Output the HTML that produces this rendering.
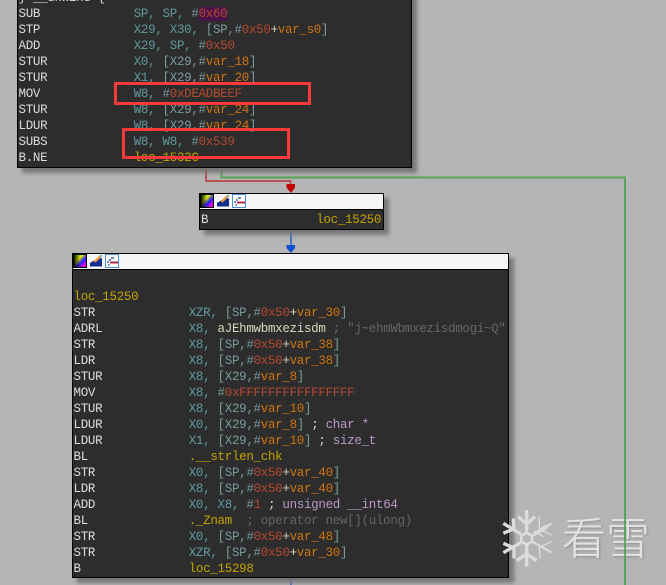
<!DOCTYPE html>
<html>
<head>
<meta charset="utf-8">
<style>
html,body{margin:0;padding:0;}
body{width:666px;height:585px;overflow:hidden;background:#b5b5b5;position:relative;}
.blk{position:absolute;background:#2d2d2d;border:1.5px solid #000;box-sizing:border-box;box-shadow:5px 5px 4px #777;}
.hd{position:absolute;left:0;right:0;top:0;height:15px;background:#f5f5f5;border-bottom:1.5px solid #000;}
pre{position:absolute;margin:0;font:12.5px/16px "Liberation Mono",monospace;letter-spacing:-.3px;color:#dcdcdc;white-space:pre;}
i{font-style:normal}
.r{color:#5f9a9c}.s{color:#7b9aa0}.n{color:#b5482f}.v{color:#cf7410}.l{color:#c4a400}.c{color:#666}.t{color:#b79ac8}.y{color:#d8d8c0}
.box{position:absolute;border:3px solid #f83a3a;box-sizing:border-box;}
svg{position:absolute;overflow:visible;}
.ic{position:absolute;top:1px;width:12px;height:12px;}
.wm{position:absolute;left:562px;top:507px;font:300 44px/56px "Noto Sans CJK SC","WenQuanYi Zen Hei",sans-serif;color:#e2e2e2;-webkit-text-stroke:.3px #e2e2e2;text-shadow:1px 1px 2px #888;white-space:nowrap;}
</style>
</head>
<body>

<svg style="left:0;top:0" width="666" height="585">
<path d="M206 167V181H290.500V186" fill="none" stroke="#b95353" stroke-width="2"/>
<path d="M221.500 167V177.500H625V585" fill="none" stroke="#56a556" stroke-width="2"/>
<path d="M291 229V247" fill="none" stroke="#4a74c8" stroke-width="2"/>
<path d="M291 577V585" fill="none" stroke="#4a74c8" stroke-width="2"/>
<path d="M286.500 184H295V187.500L291 193L286.500 187.500Z" fill="#c00000"/>
<path d="M286.500 245H295V248L291 253L286.500 248Z" fill="#0a50d0"/>
</svg>

<div class="blk" style="left:17px;top:-10px;width:395px;height:178px;">
<pre style="left:0.500px;top:-1.500px">} __unwind {
SUB             <i class="r">SP, SP, </i><i class="s">#</i><i class="n" style="background:#4a124a">0x60</i>
STP             <i class="r">X29, X30, </i><i class="s">[SP,#</i><i class="n">0x50</i><i class="y">+</i><i class="v">var_s0</i><i class="s">]</i>
ADD             <i class="r">X29, SP, </i><i class="s">#</i><i class="n">0x50</i>
STUR            <i class="r">X0, </i><i class="s">[X29,#</i><i class="v">var_18</i><i class="s">]</i>
STUR            <i class="r">X1, </i><i class="s">[X29,#</i><i class="v">var_20</i><i class="s">]</i>
MOV             <i class="r">W8, </i><i class="s">#</i><i class="n">0xDEADBEEF</i>
STUR            <i class="r">W8, </i><i class="s">[X29,#</i><i class="v">var_24</i><i class="s">]</i>
LDUR            <i class="r">W8, </i><i class="s">[X29,#</i><i class="v">var_24</i><i class="s">]</i>
SUBS            <i class="r">W8, W8, </i><i class="s">#</i><i class="n">0x539</i>
B.NE            <i class="l">loc_1532C</i></pre>
</div>

<div class="blk" style="left:199px;top:193px;width:185px;height:37px;">
<div class="hd">
<svg class="ic" style="left:1px" width="12" height="12" viewBox="0 0 12 12"><defs><linearGradient id="g1" x1="0" y1="0" x2="1" y2="1"><stop offset="0" stop-color="#2f2"/><stop offset=".35" stop-color="#ee0"/><stop offset=".6" stop-color="#22e"/><stop offset=".85" stop-color="#e0e"/><stop offset="1" stop-color="#e22"/></linearGradient><linearGradient id="g2" x1="0" y1="0" x2="1" y2="0"><stop offset="0" stop-color="#000" stop-opacity=".9"/><stop offset=".5" stop-color="#000" stop-opacity="0"/></linearGradient></defs><rect x="-.5" y="-.5" width="13" height="13" fill="url(#g1)" stroke="#000"/><rect width="12" height="12" fill="url(#g2)"/></svg>
<svg class="ic" style="left:17px" width="13" height="12" viewBox="0 0 13 12"><path d="M0 12V8L9 3H13V12Z" fill="#11308c"/><path d="M5 7L11 1" stroke="#ec9a3c" stroke-width="2.500"/><path d="M11 1L13 0" stroke="#5ab" stroke-width="2"/></svg>
<svg class="ic" style="left:33px" width="12" height="12" viewBox="0 0 12 12"><rect x="-.5" y="-.5" width="13" height="13" fill="#fff" stroke="#4a90d8"/><path d="M5 3H8M3 5H5M1 7H3" stroke="#1a3a9c" stroke-width="1.200"/><path d="M4 7.500H12" stroke="#b02848" stroke-width="2"/><path d="M2 10H4" stroke="#1a3a9c"/></svg>
</div>
<pre style="left:1px;top:18px">B               <i class="l">loc_15250</i></pre>
</div>

<div class="blk" style="left:72px;top:253px;width:437px;height:325px;">
<div class="hd">
<svg class="ic" style="left:1px" width="12" height="12" viewBox="0 0 12 12"><rect x="-.5" y="-.5" width="13" height="13" fill="url(#g1)" stroke="#000"/><rect width="12" height="12" fill="url(#g2)"/></svg>
<svg class="ic" style="left:17px" width="13" height="12" viewBox="0 0 13 12"><path d="M0 12V8L9 3H13V12Z" fill="#11308c"/><path d="M5 7L11 1" stroke="#ec9a3c" stroke-width="2.500"/><path d="M11 1L13 0" stroke="#5ab" stroke-width="2"/></svg>
<svg class="ic" style="left:33px" width="12" height="12" viewBox="0 0 12 12"><rect x="-.5" y="-.5" width="13" height="13" fill="#fff" stroke="#4a90d8"/><path d="M5 3H8M3 5H5M1 7H3" stroke="#1a3a9c" stroke-width="1.200"/><path d="M4 7.500H12" stroke="#b02848" stroke-width="2"/><path d="M2 10H4" stroke="#1a3a9c"/></svg>
</div>
<pre style="left:0.500px;top:35px"><i class="l">loc_15250</i>
STR             <i class="r">XZR, </i><i class="s">[SP,#</i><i class="n">0x50</i><i class="y">+</i><i class="v">var_30</i><i class="s">]</i>
ADRL            <i class="r">X8, </i><i class="y">aJEhmwbmxezisdm</i> <i class="c">; "j~ehmWbmxezisdmogi~Q"</i>
STR             <i class="r">X8, </i><i class="s">[SP,#</i><i class="n">0x50</i><i class="y">+</i><i class="v">var_38</i><i class="s">]</i>
LDR             <i class="r">X8, </i><i class="s">[SP,#</i><i class="n">0x50</i><i class="y">+</i><i class="v">var_38</i><i class="s">]</i>
STUR            <i class="r">X8, </i><i class="s">[X29,#</i><i class="v">var_8</i><i class="s">]</i>
MOV             <i class="r">X8, </i><i class="s">#</i><i class="n">0xFFFFFFFFFFFFFFFF</i>
STUR            <i class="r">X8, </i><i class="s">[X29,#</i><i class="v">var_10</i><i class="s">]</i>
LDUR            <i class="r">X0, </i><i class="s">[X29,#</i><i class="v">var_8</i><i class="s">]</i> <i class="y">;</i> <i class="t">char *</i>
LDUR            <i class="r">X1, </i><i class="s">[X29,#</i><i class="v">var_10</i><i class="s">]</i> <i class="y">;</i> <i class="t">size_t</i>
BL              <i class="l">.__strlen_chk</i>
STR             <i class="r">X0, </i><i class="s">[SP,#</i><i class="n">0x50</i><i class="y">+</i><i class="v">var_40</i><i class="s">]</i>
LDR             <i class="r">X8, </i><i class="s">[SP,#</i><i class="n">0x50</i><i class="y">+</i><i class="v">var_40</i><i class="s">]</i>
ADD             <i class="r">X0, X8, </i><i class="s">#</i><i class="n">1</i> <i class="y">;</i> <i class="t">unsigned __int64</i>
BL              <i class="l">._Znam</i>  <i class="c">; operator new[](ulong)</i>
STR             <i class="r">X0, </i><i class="s">[SP,#</i><i class="n">0x50</i><i class="y">+</i><i class="v">var_48</i><i class="s">]</i>
STR             <i class="r">XZR, </i><i class="s">[SP,#</i><i class="n">0x50</i><i class="y">+</i><i class="v">var_30</i><i class="s">]</i>
B               <i class="l">loc_15298</i></pre>
</div>

<div class="box" style="left:114px;top:82px;width:197px;height:23px;"></div>
<div class="box" style="left:122px;top:128px;width:168px;height:31px;"></div>

<svg style="left:490px;top:490px" width="176" height="95" viewBox="0 0 528 285">
<g fill="none" stroke="#dcdcdc" stroke-width="10">
<path d="M110 60V125M110 165V230"/>
<path d="M85 80L110 102L135 80M80 212L110 192L140 212"/>
<path d="M40 100L92 132M40 188L92 158"/>
<path d="M70 85L72 116L40 130M40 160L72 174L72 205"/>
<path d="M110 128L126 137V155L110 164L94 155V137Z" stroke-width="8"/>
</g>
<g fill="none" stroke="#dcdcdc" stroke-width="4">
<path d="M128 137L185 100M128 155L185 188" stroke-width="7"/>
<path d="M148 80V118L185 135M185 155L148 172L150 205"/>
<path d="M130 130L168 106M134 136L172 114M132 122L160 140"/>
</g>
</svg>

<div class="wm">看雪</div>

<svg style="left:0;top:0" width="666" height="585">
<path d="M625 500V585" stroke="#56a556" stroke-width="2" opacity=".85"/>
</svg>

</body>
</html>
